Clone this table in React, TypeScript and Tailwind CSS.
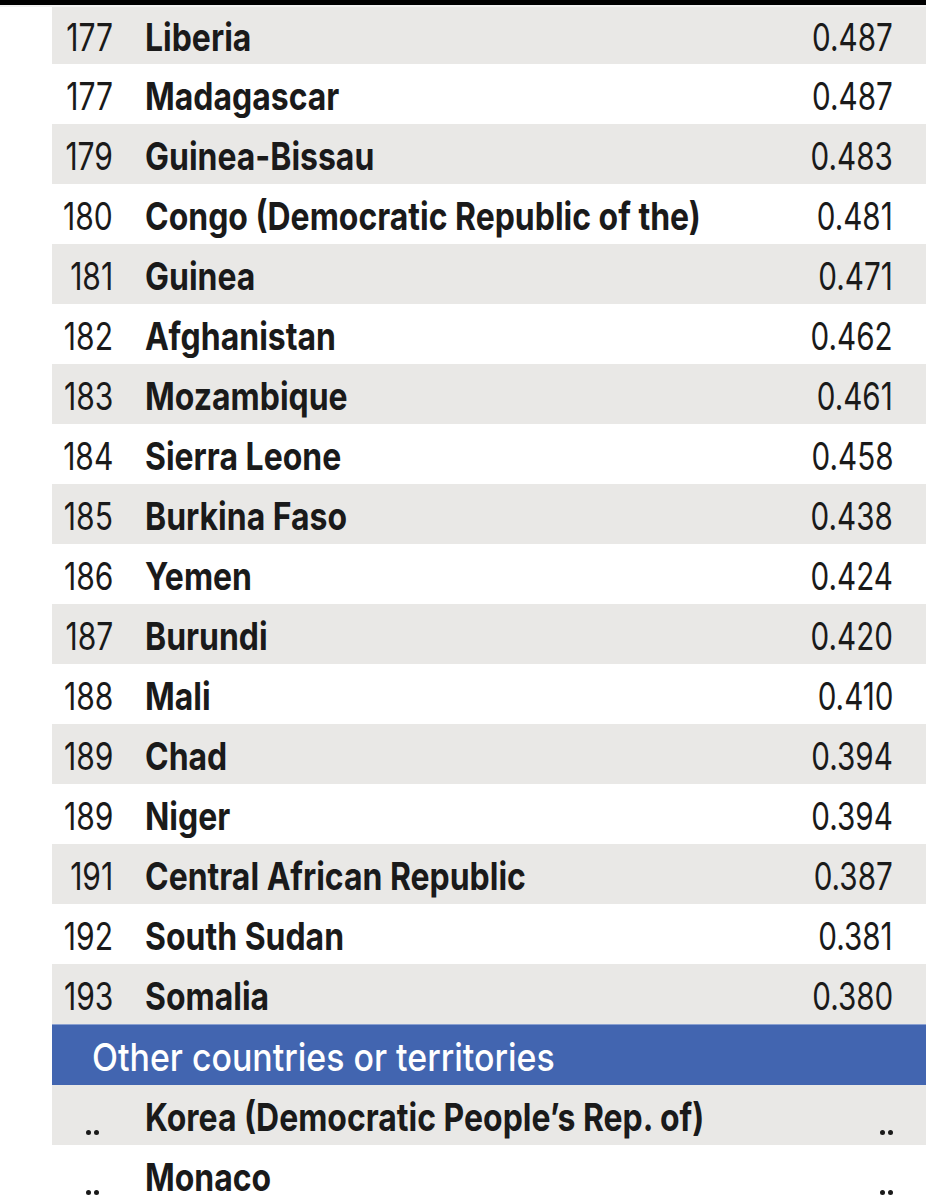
import React from "react";

const rows: [string, string, string][] = [
  ["177", "Liberia", "0.487"],
  ["177", "Madagascar", "0.487"],
  ["179", "Guinea-Bissau", "0.483"],
  ["180", "Congo (Democratic Republic of the)", "0.481"],
  ["181", "Guinea", "0.471"],
  ["182", "Afghanistan", "0.462"],
  ["183", "Mozambique", "0.461"],
  ["184", "Sierra Leone", "0.458"],
  ["185", "Burkina Faso", "0.438"],
  ["186", "Yemen", "0.424"],
  ["187", "Burundi", "0.420"],
  ["188", "Mali", "0.410"],
  ["189", "Chad", "0.394"],
  ["189", "Niger", "0.394"],
  ["191", "Central African Republic", "0.387"],
  ["192", "South Sudan", "0.381"],
  ["193", "Somalia", "0.380"],
];

const font = { fontFamily: 'Inter, "DejaVu Sans Condensed", sans-serif' };

function Dots() {
  return (
    <div className="self-end mb-[10px] flex gap-[3px]" aria-label="..">
      <span className="block w-[5px] h-[5px] rounded-full bg-[#1a1a1a]" />
      <span className="block w-[5px] h-[5px] rounded-full bg-[#1a1a1a]" />
    </div>
  );
}

function Cells({ rank, name, value, dots }: { rank: string; name: string; value: string; dots?: boolean }) {
  return (
    <>
      <div className="w-[61px] shrink-0 self-stretch flex items-center justify-end">
        {dots ? (
          <div className="mr-[14px] self-stretch flex">
            <Dots />
          </div>
        ) : (
          <span className="inline-block whitespace-nowrap origin-right scale-x-[0.78] text-[38.5px] font-normal leading-none text-[#1a1a1a]">{rank}</span>
        )}
      </div>
      <div className="ml-[32px] flex-1 min-w-0">
        <span className="inline-block whitespace-nowrap origin-left scale-x-[0.83] text-[38.5px] font-bold leading-none text-[#1a1a1a]">{name}</span>
      </div>
      <div className="w-[140px] shrink-0 self-stretch pr-[33px] flex items-center justify-end">
        {dots ? (
          <div className="self-stretch flex">
            <Dots />
          </div>
        ) : (
          <span className="inline-block whitespace-nowrap origin-right scale-x-[0.77] text-[38.5px] font-normal leading-none text-[#1a1a1a]">{value}</span>
        )}
      </div>
    </>
  );
}

export default function App() {
  return (
    <div className="w-[926px] h-[1200px] bg-white overflow-hidden" style={font}>
      <div className="h-[5px] bg-black" />
      <div className="h-[2px] bg-[#f2f2f2]" />
      <div className="ml-[52px]">
        {rows.map((r, i) => (
          <div
            key={i}
            className={`flex items-center pt-[4px] ${i === 0 ? "h-[57px]" : "h-[60px]"} ${i % 2 === 0 ? "bg-[#e9e8e6]" : "bg-white"}`}
          >
            <Cells rank={r[0]} name={r[1]} value={r[2]} />
          </div>
        ))}
        <div className="h-[61px] bg-[#4265b0] flex items-center pt-[4px] border-t border-[#8aa0d0]">
          <span className="ml-[40px] inline-block whitespace-nowrap origin-left scale-x-[0.88] text-[38.5px] font-medium leading-none text-white">
            Other countries or territories
          </span>
        </div>
        <div className="flex items-center pt-[4px] h-[60px] bg-[#e9e8e6]">
          <Cells rank="" name="Korea (Democratic People’s Rep. of)" value="" dots />
        </div>
        <div className="flex items-center pt-[4px] h-[60px] bg-white">
          <Cells rank="" name="Monaco" value="" dots />
        </div>
      </div>
    </div>
  );
}
